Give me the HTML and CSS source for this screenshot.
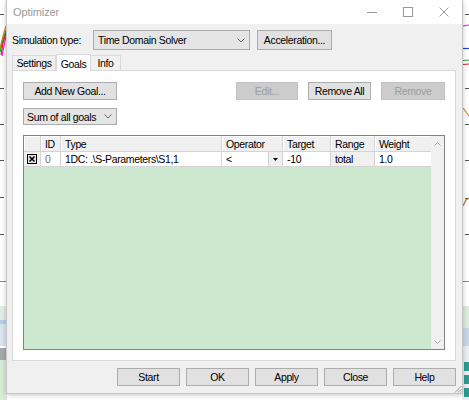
FILE: index.html
```html
<!DOCTYPE html>
<html>
<head>
<meta charset="utf-8">
<title>Optimizer</title>
<link rel="stylesheet" href="styles.css">
</head>
<body>
<svg class="backdrop" width="469" height="400" viewBox="0 0 469 400">
  <rect x="0" y="0" width="469" height="400" fill="#ffffff"/>
  <g stroke="#555" stroke-width="1">
    <line x1="0" y1="14.5" x2="4" y2="14.5"/>
    <line x1="0" y1="88.5" x2="4" y2="88.5"/>
    <line x1="0" y1="124.5" x2="4" y2="124.5"/>
    <line x1="0" y1="160.5" x2="4" y2="160.5"/>
    <line x1="0" y1="197.5" x2="4" y2="197.5"/>
    <line x1="0" y1="234.5" x2="4" y2="234.5"/>
    <line x1="465" y1="14.5" x2="469" y2="14.5"/>
    <line x1="465" y1="88.5" x2="469" y2="88.5"/>
    <line x1="465" y1="124.5" x2="469" y2="124.5"/>
    <line x1="465" y1="160.5" x2="469" y2="160.5"/>
    <line x1="465" y1="198.5" x2="469" y2="198.5"/>
    <line x1="465" y1="234.5" x2="469" y2="234.5"/>
  </g>
  <g stroke-width="1.2" fill="none">
    <polyline points="6,26 3,36 0,48" stroke="#e08a1e"/>
    <polyline points="6,30 3,40 0,52" stroke="#2aa02a"/>
    <polyline points="6,33 3,43 1,55" stroke="#e02020"/>
    <polyline points="6,36 4,46 2,56" stroke="#e020e0"/>
    <line x1="463" y1="26" x2="469" y2="25" stroke="#e020e0"/>
    <line x1="463" y1="48.5" x2="469" y2="48.5" stroke="#2040d0"/>
    <line x1="463" y1="60.5" x2="469" y2="60" stroke="#2aa02a"/>
    <line x1="463" y1="64.5" x2="469" y2="64" stroke="#e02020"/>
    <polyline points="463,108 466,112 469,116" stroke="#e08a1e"/>
    <polyline points="463,206 466,200 469,198" stroke="#b07a30"/>
  </g>
  <line x1="0" y1="281.5" x2="7" y2="281.5" stroke="#888"/>
  <line x1="462" y1="281.5" x2="469" y2="281.5" stroke="#888"/>
  <rect x="0" y="306" width="7" height="14" fill="#e2eee2"/>
  <rect x="0" y="320" width="7" height="4" fill="#b9cde6"/>
  <rect x="0" y="324" width="7" height="22" fill="#dbe5ef"/>
  <rect x="0" y="348" width="7" height="12" fill="#a8a8a8"/>
  <rect x="0" y="360" width="7" height="40" fill="#d6ebd6"/>
  <rect x="462" y="306" width="7" height="22" fill="#dcebdc"/>
  <rect x="462" y="328" width="7" height="18" fill="#cbd8e8"/>
  <rect x="462" y="346" width="7" height="54" fill="#e9eef2"/>
  <g fill="#2a9d8f">
    <rect x="464" y="362" width="5" height="9"/>
    <rect x="464" y="375" width="5" height="9"/>
    <rect x="464" y="388" width="5" height="9"/>
  </g>
</svg>

<div class="dialog">
  <div class="titlebar">
    <span class="title">Optimizer</span>
    <div class="winctl">
      <span class="winbtn">
        <svg width="10" height="10" viewBox="0 0 10 10"><line x1="0" y1="5.5" x2="10" y2="5.5" stroke="#999" stroke-width="1"/></svg>
      </span>
      <span class="winbtn">
        <svg width="10" height="10" viewBox="0 0 10 10"><rect x="0.5" y="0.5" width="9" height="9" fill="none" stroke="#999" stroke-width="1"/></svg>
      </span>
      <span class="winbtn">
        <svg width="10" height="10" viewBox="0 0 10 10"><path d="M0.5 0.5 L9.5 9.5 M9.5 0.5 L0.5 9.5" stroke="#999" stroke-width="1"/></svg>
      </span>
    </div>
  </div>

  <div class="body">
    <div class="simrow">
      <span class="label">Simulation type:</span>
      <div class="combo combo-sim">
        <span>Time Domain Solver</span>
        <svg class="chev" width="8" height="5" viewBox="0 0 8 5"><polyline points="0.5,0.5 4,4 7.5,0.5" fill="none" stroke="#606060" stroke-width="1"/></svg>
      </div>
      <button class="btn btn-accel">Acceleration...</button>
    </div>

    <div class="tabs">
      <div class="tab tab-settings">Settings</div>
      <div class="tab tab-goals active">Goals</div>
      <div class="tab tab-info">Info</div>
    </div>

    <div class="panel">
      <div class="toolbar">
        <button class="btn btn-add">Add New Goal...</button>
        <div class="spacer"></div>
        <button class="btn btn-edit disabled">Edit...</button>
        <button class="btn btn-removeall">Remove All</button>
        <button class="btn btn-remove disabled">Remove</button>
      </div>

      <div class="combo combo-sum">
        <span>Sum of all goals</span>
        <svg class="chev" width="8" height="5" viewBox="0 0 8 5"><polyline points="0.5,0.5 4,4 7.5,0.5" fill="none" stroke="#606060" stroke-width="1"/></svg>
      </div>

      <div class="grid">
        <div class="grid-main">
          <div class="row head">
            <div class="cell c-check"></div>
            <div class="cell c-id">ID</div>
            <div class="cell c-type">Type</div>
            <div class="cell c-op">Operator</div>
            <div class="cell c-target">Target</div>
            <div class="cell c-range">Range</div>
            <div class="cell c-weight">Weight</div>
          </div>
          <div class="row data">
            <div class="cell c-check">
              <svg width="10" height="10" viewBox="0 0 10 10">
                <rect x="0.5" y="0.5" width="9" height="9" fill="#dfe8df" stroke="#000" stroke-width="1"/>
                <path d="M2.5 2.5 L7.5 7.5 M7.5 2.5 L2.5 7.5" stroke="#000" stroke-width="1.6"/>
              </svg>
            </div>
            <div class="cell c-id muted">0</div>
            <div class="cell c-type">1DC: .\S-Parameters\S1,1</div>
            <div class="cell c-op">
              <span class="optext">&lt;</span>
              <span class="dropbtn">
                <svg width="5" height="3" viewBox="0 0 5 3"><polygon points="0,0 5,0 2.5,3" fill="#000"/></svg>
              </span>
            </div>
            <div class="cell c-target">-10</div>
            <div class="cell c-range gray">total</div>
            <div class="cell c-weight">1.0</div>
          </div>
          <div class="empty"></div>
        </div>
        <div class="vscroll">
          <svg width="7" height="4" viewBox="0 0 7 4"><polyline points="0.5,3.5 3.5,0.5 6.5,3.5" fill="none" stroke="#a6a6a6" stroke-width="1"/></svg>
          <svg width="7" height="4" viewBox="0 0 7 4"><polyline points="0.5,0.5 3.5,3.5 6.5,0.5" fill="none" stroke="#a6a6a6" stroke-width="1"/></svg>
        </div>
      </div>
    </div>

    <div class="footer">
      <button class="btn btn-foot">Start</button>
      <button class="btn btn-foot">OK</button>
      <button class="btn btn-foot">Apply</button>
      <button class="btn btn-foot">Close</button>
      <button class="btn btn-foot">Help</button>
    </div>
  </div>

  <svg class="grip" width="8" height="8" viewBox="0 0 8 8">
    <path d="M7.5 1 L1 7.5 M7.5 4 L4 7.5 M7.5 6.5 L6.5 7.5" stroke="#a0a0a0" stroke-width="1"/>
  </svg>
</div>
</body>
</html>
```

FILE: styles.css
```css
* {
  box-sizing: border-box;
}

html,
body {
  margin: 0;
  padding: 0;
}

body {
  width: 469px;
  height: 400px;
  overflow: hidden;
  position: relative;
  background: #ffffff;
  font-family: "Liberation Sans", Arial, sans-serif;
  font-size: 10.5px;
  letter-spacing: -0.35px;
  color: #000000;
}

.backdrop {
  position: absolute;
  left: 0;
  top: 0;
}

.dialog {
  position: absolute;
  left: 6px;
  top: 0;
  width: 457px;
  height: 394px;
  background: #f0f0f0;
  border: 1px solid #c6c6c6;
  border-top: none;
  box-shadow: 0 1px 5px rgba(0, 0, 0, 0.22);
  display: flex;
  flex-direction: column;
}

.titlebar {
  height: 24px;
  flex-shrink: 0;
  background: #ffffff;
  display: flex;
  align-items: center;
  padding-left: 6px;
}

.title {
  flex: 1;
  color: #9a9a9a;
  font-size: 11px;
  letter-spacing: -0.1px;
}

.winctl {
  display: flex;
  height: 24px;
}

.winbtn {
  width: 36px;
  display: flex;
  align-items: center;
  justify-content: center;
}

.winbtn svg {
  display: block;
}

.body {
  flex: 1;
  display: flex;
  flex-direction: column;
  padding: 0 6px 0 5px;
}

.simrow {
  display: flex;
  align-items: center;
  height: 20px;
  margin-top: 6px;
}

.label {
  width: 81px;
}

.combo {
  display: flex;
  align-items: center;
  justify-content: space-between;
  background: #e5e5e5;
  border: 1px solid #acacac;
  padding: 0 4px 0 4px;
}

.combo span {
  white-space: nowrap;
}

.chev {
  display: block;
  flex-shrink: 0;
}

.combo-sim {
  width: 157px;
  height: 20px;
}

.btn {
  display: flex;
  align-items: center;
  justify-content: center;
  padding: 0;
  margin: 0;
  background: #e1e1e1;
  border: 1px solid #adadad;
  font: inherit;
  letter-spacing: inherit;
  color: #000000;
  white-space: nowrap;
}

.btn.disabled {
  background: #cccccc;
  border-color: #c2c2c2;
  color: #9d9d9d;
}

.btn-accel {
  width: 75px;
  height: 20px;
  margin-left: 7px;
}

.tabs {
  display: flex;
  height: 15px;
  margin-top: 5px;
  position: relative;
  z-index: 1;
}

.tab {
  height: 15px;
  display: flex;
  align-items: center;
  justify-content: center;
  background: #f0f0f0;
  border: 1px solid #d9d9d9;
  border-bottom: none;
}

.tab + .tab {
  border-left: none;
}

.tab-settings {
  width: 44px;
}

.tab-goals {
  width: 35px;
}

.tab-info {
  width: 30px;
}

.tab.active {
  background: #ffffff;
  height: 17px;
  margin-top: -2px;
  border-left: 1px solid #d9d9d9;
  padding-top: 1px;
  position: relative;
  top: 1px;
}

.panel {
  height: 291px;
  background: #ffffff;
  border: 1px solid #d9d9d9;
  display: flex;
  flex-direction: column;
  padding: 11px 10px 10px 10px;
}

.toolbar {
  display: flex;
  height: 18px;
}

.toolbar .btn {
  height: 18px;
}

.spacer {
  flex: 1;
}

.btn-add {
  width: 94px;
}

.btn-edit {
  width: 62px;
  margin-right: 10px;
}

.btn-removeall {
  width: 63px;
  margin-right: 10px;
}

.btn-remove {
  width: 64px;
}

.combo-sum {
  width: 94px;
  height: 17px;
  margin-top: 8px;
  padding-left: 3px;
  background: #e5e5e5;
}

.grid {
  flex: 1;
  margin-top: 10px;
  display: flex;
  border: 1px solid #828282;
  background: #ffffff;
}

.grid-main {
  flex: 1;
  display: flex;
  flex-direction: column;
}

.row {
  display: flex;
  flex-shrink: 0;
}

.row.head {
  height: 16px;
  background: #f0f0f0;
  border-bottom: 1px solid #d4d4d4;
}

.row.data {
  height: 15px;
  background: #ffffff;
  border-bottom: 1px solid #d4d4d4;
}

.cell {
  display: flex;
  align-items: center;
  padding-left: 4px;
  border-right: 1px solid #d4d4d4;
  white-space: nowrap;
  overflow: hidden;
}

.head .cell {
  box-shadow: inset 1px 1px 0 #ffffff;
}

.c-check {
  width: 17px;
  padding-left: 3px;
  background: #f0f0f0;
}

.c-check svg {
  display: block;
}

.c-id {
  width: 20px;
}

.c-type {
  width: 161px;
}

.c-op {
  width: 61px;
  padding-right: 0;
  justify-content: space-between;
}

.c-target {
  width: 48px;
}

.c-range {
  width: 44px;
}

.c-weight {
  width: 56px;
  border-right: none;
}

.muted {
  color: #707070;
}

.gray {
  background: #f0f0f0;
}

.dropbtn {
  width: 14px;
  height: 14px;
  display: flex;
  align-items: center;
  justify-content: center;
  background: #f0f0f0;
  border-left: 1px solid #d0d0d0;
}

.dropbtn svg {
  display: block;
}

.empty {
  flex: 1;
  background: #cce8cf;
}

.vscroll {
  width: 13px;
  background: #f0f0f0;
  display: flex;
  flex-direction: column;
  align-items: center;
  justify-content: space-between;
  padding: 6px 0 5px 0;
}

.vscroll svg {
  display: block;
}

.footer {
  display: flex;
  justify-content: flex-end;
  gap: 6px;
  margin-top: 7px;
}

.btn-foot {
  width: 63px;
  height: 18px;
}

.grip {
  position: absolute;
  right: 0;
  bottom: 0;
}
```
